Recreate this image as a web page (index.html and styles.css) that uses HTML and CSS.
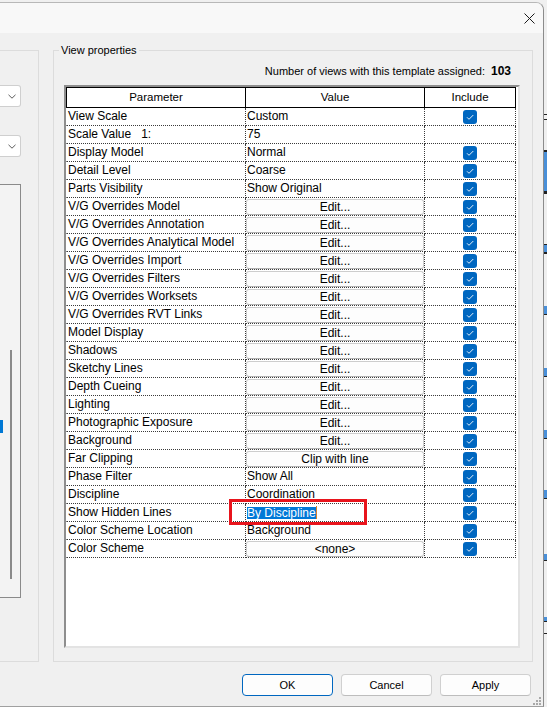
FILE: index.html
```html
<!DOCTYPE html>
<html>
<head>
<meta charset="utf-8">
<link rel="stylesheet" href="styles.css">
</head>
<body>
<div class="window">
  <div class="titlebar">
    <svg class="close" viewBox="0 0 11 11"><path d="M0.5 0.5 L10.5 10.5 M10.5 0.5 L0.5 10.5" stroke="#1b1b1b" stroke-width="1" fill="none"/></svg>
  </div>
  <div class="main">
    <div class="left-group">
      <div class="combo combo1"><svg class="chev" viewBox="0 0 8 5"><path d="M0.5 0.8 L4 4.2 L7.5 0.8" stroke="#5c5c5c" stroke-width="1" fill="none"/></svg></div>
      <div class="combo combo2"><svg class="chev" viewBox="0 0 8 5"><path d="M0.5 0.8 L4 4.2 L7.5 0.8" stroke="#5c5c5c" stroke-width="1" fill="none"/></svg></div>
      <div class="listbox">
        <div class="lb-items"><div class="lb-sel"></div></div>
        <div class="lb-thumb"></div>
      </div>
    </div>
    <fieldset class="vp">
      <legend>View properties</legend>
      <div class="count">Number of views with this template assigned:<b>103</b></div>
      <div class="frame">
        <div class="row head"><div>Parameter</div><div>Value</div><div>Include</div></div>
        <div class="row"><div>View Scale</div><div>Custom</div><div class="inc"><svg class="cb" viewBox="0 0 14 14"><rect width="14" height="14" rx="3" fill="#0067c0"/><path d="M4 7.3 L6 9.3 L10.3 5" stroke="#e6f0fa" stroke-width="1" fill="none"/></svg></div></div>
        <div class="row"><div>Scale Value   1:</div><div>75</div><div class="inc"></div></div>
        <div class="row"><div>Display Model</div><div>Normal</div><div class="inc"><svg class="cb" viewBox="0 0 14 14"><rect width="14" height="14" rx="3" fill="#0067c0"/><path d="M4 7.3 L6 9.3 L10.3 5" stroke="#e6f0fa" stroke-width="1" fill="none"/></svg></div></div>
        <div class="row"><div>Detail Level</div><div>Coarse</div><div class="inc"><svg class="cb" viewBox="0 0 14 14"><rect width="14" height="14" rx="3" fill="#0067c0"/><path d="M4 7.3 L6 9.3 L10.3 5" stroke="#e6f0fa" stroke-width="1" fill="none"/></svg></div></div>
        <div class="row"><div>Parts Visibility</div><div>Show Original</div><div class="inc"><svg class="cb" viewBox="0 0 14 14"><rect width="14" height="14" rx="3" fill="#0067c0"/><path d="M4 7.3 L6 9.3 L10.3 5" stroke="#e6f0fa" stroke-width="1" fill="none"/></svg></div></div>
        <div class="row"><div>V/G Overrides Model</div><div class="bc"><div class="btn">Edit...</div></div><div class="inc"><svg class="cb" viewBox="0 0 14 14"><rect width="14" height="14" rx="3" fill="#0067c0"/><path d="M4 7.3 L6 9.3 L10.3 5" stroke="#e6f0fa" stroke-width="1" fill="none"/></svg></div></div>
        <div class="row"><div>V/G Overrides Annotation</div><div class="bc"><div class="btn">Edit...</div></div><div class="inc"><svg class="cb" viewBox="0 0 14 14"><rect width="14" height="14" rx="3" fill="#0067c0"/><path d="M4 7.3 L6 9.3 L10.3 5" stroke="#e6f0fa" stroke-width="1" fill="none"/></svg></div></div>
        <div class="row"><div>V/G Overrides Analytical Model</div><div class="bc"><div class="btn">Edit...</div></div><div class="inc"><svg class="cb" viewBox="0 0 14 14"><rect width="14" height="14" rx="3" fill="#0067c0"/><path d="M4 7.3 L6 9.3 L10.3 5" stroke="#e6f0fa" stroke-width="1" fill="none"/></svg></div></div>
        <div class="row"><div>V/G Overrides Import</div><div class="bc"><div class="btn">Edit...</div></div><div class="inc"><svg class="cb" viewBox="0 0 14 14"><rect width="14" height="14" rx="3" fill="#0067c0"/><path d="M4 7.3 L6 9.3 L10.3 5" stroke="#e6f0fa" stroke-width="1" fill="none"/></svg></div></div>
        <div class="row"><div>V/G Overrides Filters</div><div class="bc"><div class="btn">Edit...</div></div><div class="inc"><svg class="cb" viewBox="0 0 14 14"><rect width="14" height="14" rx="3" fill="#0067c0"/><path d="M4 7.3 L6 9.3 L10.3 5" stroke="#e6f0fa" stroke-width="1" fill="none"/></svg></div></div>
        <div class="row"><div>V/G Overrides Worksets</div><div class="bc"><div class="btn">Edit...</div></div><div class="inc"><svg class="cb" viewBox="0 0 14 14"><rect width="14" height="14" rx="3" fill="#0067c0"/><path d="M4 7.3 L6 9.3 L10.3 5" stroke="#e6f0fa" stroke-width="1" fill="none"/></svg></div></div>
        <div class="row"><div>V/G Overrides RVT Links</div><div class="bc"><div class="btn">Edit...</div></div><div class="inc"><svg class="cb" viewBox="0 0 14 14"><rect width="14" height="14" rx="3" fill="#0067c0"/><path d="M4 7.3 L6 9.3 L10.3 5" stroke="#e6f0fa" stroke-width="1" fill="none"/></svg></div></div>
        <div class="row"><div>Model Display</div><div class="bc"><div class="btn">Edit...</div></div><div class="inc"><svg class="cb" viewBox="0 0 14 14"><rect width="14" height="14" rx="3" fill="#0067c0"/><path d="M4 7.3 L6 9.3 L10.3 5" stroke="#e6f0fa" stroke-width="1" fill="none"/></svg></div></div>
        <div class="row"><div>Shadows</div><div class="bc"><div class="btn">Edit...</div></div><div class="inc"><svg class="cb" viewBox="0 0 14 14"><rect width="14" height="14" rx="3" fill="#0067c0"/><path d="M4 7.3 L6 9.3 L10.3 5" stroke="#e6f0fa" stroke-width="1" fill="none"/></svg></div></div>
        <div class="row"><div>Sketchy Lines</div><div class="bc"><div class="btn">Edit...</div></div><div class="inc"><svg class="cb" viewBox="0 0 14 14"><rect width="14" height="14" rx="3" fill="#0067c0"/><path d="M4 7.3 L6 9.3 L10.3 5" stroke="#e6f0fa" stroke-width="1" fill="none"/></svg></div></div>
        <div class="row"><div>Depth Cueing</div><div class="bc"><div class="btn">Edit...</div></div><div class="inc"><svg class="cb" viewBox="0 0 14 14"><rect width="14" height="14" rx="3" fill="#0067c0"/><path d="M4 7.3 L6 9.3 L10.3 5" stroke="#e6f0fa" stroke-width="1" fill="none"/></svg></div></div>
        <div class="row"><div>Lighting</div><div class="bc"><div class="btn">Edit...</div></div><div class="inc"><svg class="cb" viewBox="0 0 14 14"><rect width="14" height="14" rx="3" fill="#0067c0"/><path d="M4 7.3 L6 9.3 L10.3 5" stroke="#e6f0fa" stroke-width="1" fill="none"/></svg></div></div>
        <div class="row"><div>Photographic Exposure</div><div class="bc"><div class="btn">Edit...</div></div><div class="inc"><svg class="cb" viewBox="0 0 14 14"><rect width="14" height="14" rx="3" fill="#0067c0"/><path d="M4 7.3 L6 9.3 L10.3 5" stroke="#e6f0fa" stroke-width="1" fill="none"/></svg></div></div>
        <div class="row"><div>Background</div><div class="bc"><div class="btn">Edit...</div></div><div class="inc"><svg class="cb" viewBox="0 0 14 14"><rect width="14" height="14" rx="3" fill="#0067c0"/><path d="M4 7.3 L6 9.3 L10.3 5" stroke="#e6f0fa" stroke-width="1" fill="none"/></svg></div></div>
        <div class="row"><div>Far Clipping</div><div class="bc"><div class="btn">Clip with line</div></div><div class="inc"><svg class="cb" viewBox="0 0 14 14"><rect width="14" height="14" rx="3" fill="#0067c0"/><path d="M4 7.3 L6 9.3 L10.3 5" stroke="#e6f0fa" stroke-width="1" fill="none"/></svg></div></div>
        <div class="row"><div>Phase Filter</div><div>Show All</div><div class="inc"><svg class="cb" viewBox="0 0 14 14"><rect width="14" height="14" rx="3" fill="#0067c0"/><path d="M4 7.3 L6 9.3 L10.3 5" stroke="#e6f0fa" stroke-width="1" fill="none"/></svg></div></div>
        <div class="row"><div>Discipline</div><div>Coordination</div><div class="inc"><svg class="cb" viewBox="0 0 14 14"><rect width="14" height="14" rx="3" fill="#0067c0"/><path d="M4 7.3 L6 9.3 L10.3 5" stroke="#e6f0fa" stroke-width="1" fill="none"/></svg></div></div>
        <div class="row"><div>Show Hidden Lines</div><div class="selcell"><span class="seltext">By Discipline</span><span class="caret"></span><div class="redbox"></div></div><div class="inc"><svg class="cb" viewBox="0 0 14 14"><rect width="14" height="14" rx="3" fill="#0067c0"/><path d="M4 7.3 L6 9.3 L10.3 5" stroke="#e6f0fa" stroke-width="1" fill="none"/></svg></div></div>
        <div class="row"><div>Color Scheme Location</div><div>Background</div><div class="inc"><svg class="cb" viewBox="0 0 14 14"><rect width="14" height="14" rx="3" fill="#0067c0"/><path d="M4 7.3 L6 9.3 L10.3 5" stroke="#e6f0fa" stroke-width="1" fill="none"/></svg></div></div>
        <div class="row"><div>Color Scheme</div><div class="bc"><div class="btn">&lt;none&gt;</div></div><div class="inc"><svg class="cb" viewBox="0 0 14 14"><rect width="14" height="14" rx="3" fill="#0067c0"/><path d="M4 7.3 L6 9.3 L10.3 5" stroke="#e6f0fa" stroke-width="1" fill="none"/></svg></div></div>
      </div>
    </fieldset>
  </div>
  <div class="footer">
    <button class="dlg-btn default">OK</button>
    <button class="dlg-btn">Cancel</button>
    <button class="dlg-btn">Apply</button>
  </div>
  <svg class="grip" viewBox="0 0 10 10"><g fill="#a8a8a8"><rect x="7" y="1" width="2" height="2"/><rect x="4" y="4" width="2" height="2"/><rect x="7" y="4" width="2" height="2"/><rect x="1" y="7" width="2" height="2"/><rect x="4" y="7" width="2" height="2"/><rect x="7" y="7" width="2" height="2"/></g></svg>
</div>
<div class="backdrop"></div>
</body>
</html>
```

FILE: styles.css
```css
* { box-sizing: border-box; }

body {
  margin: 0;
  width: 547px;
  height: 707px;
  overflow: hidden;
  display: flex;
  align-items: flex-start;
  background: #f0f0f0;
  font-family: "Liberation Sans", Arial, sans-serif;
  font-size: 12px;
  color: #000;
}

.window {
  position: relative;
  flex: none;
  width: 544px;
  height: 705px;
  margin-top: 2px;
  background: #f0f0f0;
  border-top: 1px solid #b8b8b8;
  border-right: 1px solid #8c8c8c;
  border-bottom: 1px solid #a0a0a0;
  border-top-right-radius: 8px;
  display: flex;
  flex-direction: column;
}

.titlebar {
  flex: none;
  height: 30px;
  background: #f8f8f8;
  border-top-right-radius: 7px;
  display: flex;
  align-items: center;
  justify-content: flex-end;
  padding-right: 8px;
}

.close { width: 11px; height: 11px; display: block; }

.main {
  flex: none;
  height: 629px;
  padding-top: 10px;
  display: flex;
  gap: 14px;
  align-items: stretch;
}

.left-group {
  flex: none;
  width: 39px;
  margin-top: 7px;
  border: 1px solid #dcdcdc;
  border-left: none;
  padding-top: 34px;
  display: flex;
  flex-direction: column;
}

.combo {
  width: 21px;
  height: 22px;
  background: #fff;
  border: 1px solid #cfcfcf;
  border-left: none;
  border-radius: 0 3px 3px 0;
  display: flex;
  align-items: center;
  padding-left: 8px;
}
.combo1 { margin-bottom: 28px; }
.combo2 { margin-bottom: 27px; }
.chev { width: 8px; height: 5px; display: block; }

.listbox {
  width: 21px;
  height: 414px;
  border: 1px solid #8a8a8a;
  border-left: none;
  background: #f3f3f3;
  display: flex;
}
.lb-items { width: 10px; }
.lb-sel { margin-top: 235px; width: 3px; height: 13px; background: #0078d4; }
.lb-thumb { width: 2px; margin-top: 165px; height: 229px; background: #8a8a8a; }

.vp {
  flex: none;
  width: 480px;
  margin: 0;
  padding: 0 12px 0 10px;
  min-width: 0;
  border: 1px solid #dcdcdc;
}

.vp legend {
  margin-left: -5px;
  padding: 0 2px;
  font-size: 11px;
  line-height: 14px;
}

.count {
  margin-top: 7px;
  line-height: 14px;
  font-size: 11px;
  text-align: right;
  padding-right: 9px;
}
.count b { font-size: 12px; margin-left: 6px; }

.frame {
  margin-top: 7px;
  height: 563px;
  background: #fff;
  border: 2px solid;
  border-color: #8e8e8e #e3e3e3 #e3e3e3 #8e8e8e;
}

.row {
  display: grid;
  grid-template-columns: 180px 179px 91px;
  height: 18px;
}
.row > div {
  border-right: 1px dotted #3a3a3a;
  border-bottom: 1px dotted #3a3a3a;
  line-height: 17px;
  padding-left: 1px;
  white-space: pre;
}
.row > div:first-child { border-left: 1px solid transparent; }

.row.head { height: 21px; }
.row.head > div {
  border-top: 1px solid #000;
  border-bottom: 1px solid #000;
  border-right: 1px solid #000;
  text-align: center;
  line-height: 19px;
  font-size: 11.5px;
  padding-left: 0;
}
.row.head > div:first-child { border-left: 1px solid #000; }

.row > .bc { padding-left: 0; }
.btn {
  margin-top: 1px;
  width: 178px;
  height: 16px;
  border: 1px solid #cdcdcd;
  border-bottom-color: #b3b3b3;
  border-radius: 3px;
  background: #fdfdfd;
  text-align: center;
  line-height: 14px;
}

.row > .inc {
  padding-left: 0;
  display: flex;
  align-items: center;
  justify-content: center;
}
.cb { width: 14px; height: 14px; display: block; }

.row > .selcell {
  position: relative;
  display: flex;
  align-items: center;
}
.seltext {
  background: #0078d7;
  color: #fff;
  line-height: 12px;
  height: 12px;
}
.caret { width: 1px; height: 13px; background: #d9822b; }
.redbox {
  position: absolute;
  left: -17px;
  top: -5px;
  width: 138px;
  height: 26px;
  border: 3px solid #e8141c;
}

.footer {
  flex: 1;
  display: flex;
  justify-content: flex-end;
  align-items: flex-start;
  gap: 8px;
  padding: 12px 12px 0 0;
}

.dlg-btn {
  width: 91px;
  height: 22px;
  margin: 0;
  padding: 0;
  border: 1px solid #d0d0d0;
  border-bottom-color: #bdbdbd;
  border-radius: 4px;
  background: #fdfdfd;
  font-family: "Liberation Sans", Arial, sans-serif;
  font-size: 11px;
  color: #000;
}
.dlg-btn.default { border-color: #0067c0; }

.grip {
  position: absolute;
  right: 1px;
  bottom: 0;
  width: 10px;
  height: 10px;
}

.backdrop {
  flex: 1;
  height: 707px;
  background: linear-gradient(to bottom,
    #f0f0f0 0, #f0f0f0 114px, #222 114px, #222 115px, #f0f0f0 115px, #f0f0f0 119px, #222 119px, #222 120px,
    #f0f0f0 120px, #f0f0f0 150px, #222 150px, #222 152px, #4a90d9 152px, #4a90d9 191px, #222 191px, #222 194px,
    #f0f0f0 194px, #f0f0f0 244px, #222 244px, #222 245px, #4a90d9 245px, #4a90d9 252px, #222 252px, #222 254px,
    #f0f0f0 254px, #f0f0f0 306px, #4a90d9 306px, #4a90d9 314px, #222 314px, #222 315px,
    #f0f0f0 315px, #f0f0f0 368px, #4a90d9 368px, #4a90d9 376px, #222 376px, #222 377px,
    #f0f0f0 377px, #f0f0f0 430px, #4a90d9 430px, #4a90d9 438px, #222 438px, #222 439px,
    #f0f0f0 439px, #f0f0f0 490px, #4a90d9 490px, #4a90d9 498px, #222 498px, #222 499px,
    #f0f0f0 499px, #f0f0f0 554px, #4a90d9 554px, #4a90d9 560px, #222 560px, #222 561px,
    #f0f0f0 561px, #f0f0f0 617px, #4a90d9 617px, #4a90d9 621px, #222 621px, #222 622px,
    #f0f0f0 622px, #f0f0f0 633px, #222 633px, #222 634px, #f0f0f0 634px);
}
```
